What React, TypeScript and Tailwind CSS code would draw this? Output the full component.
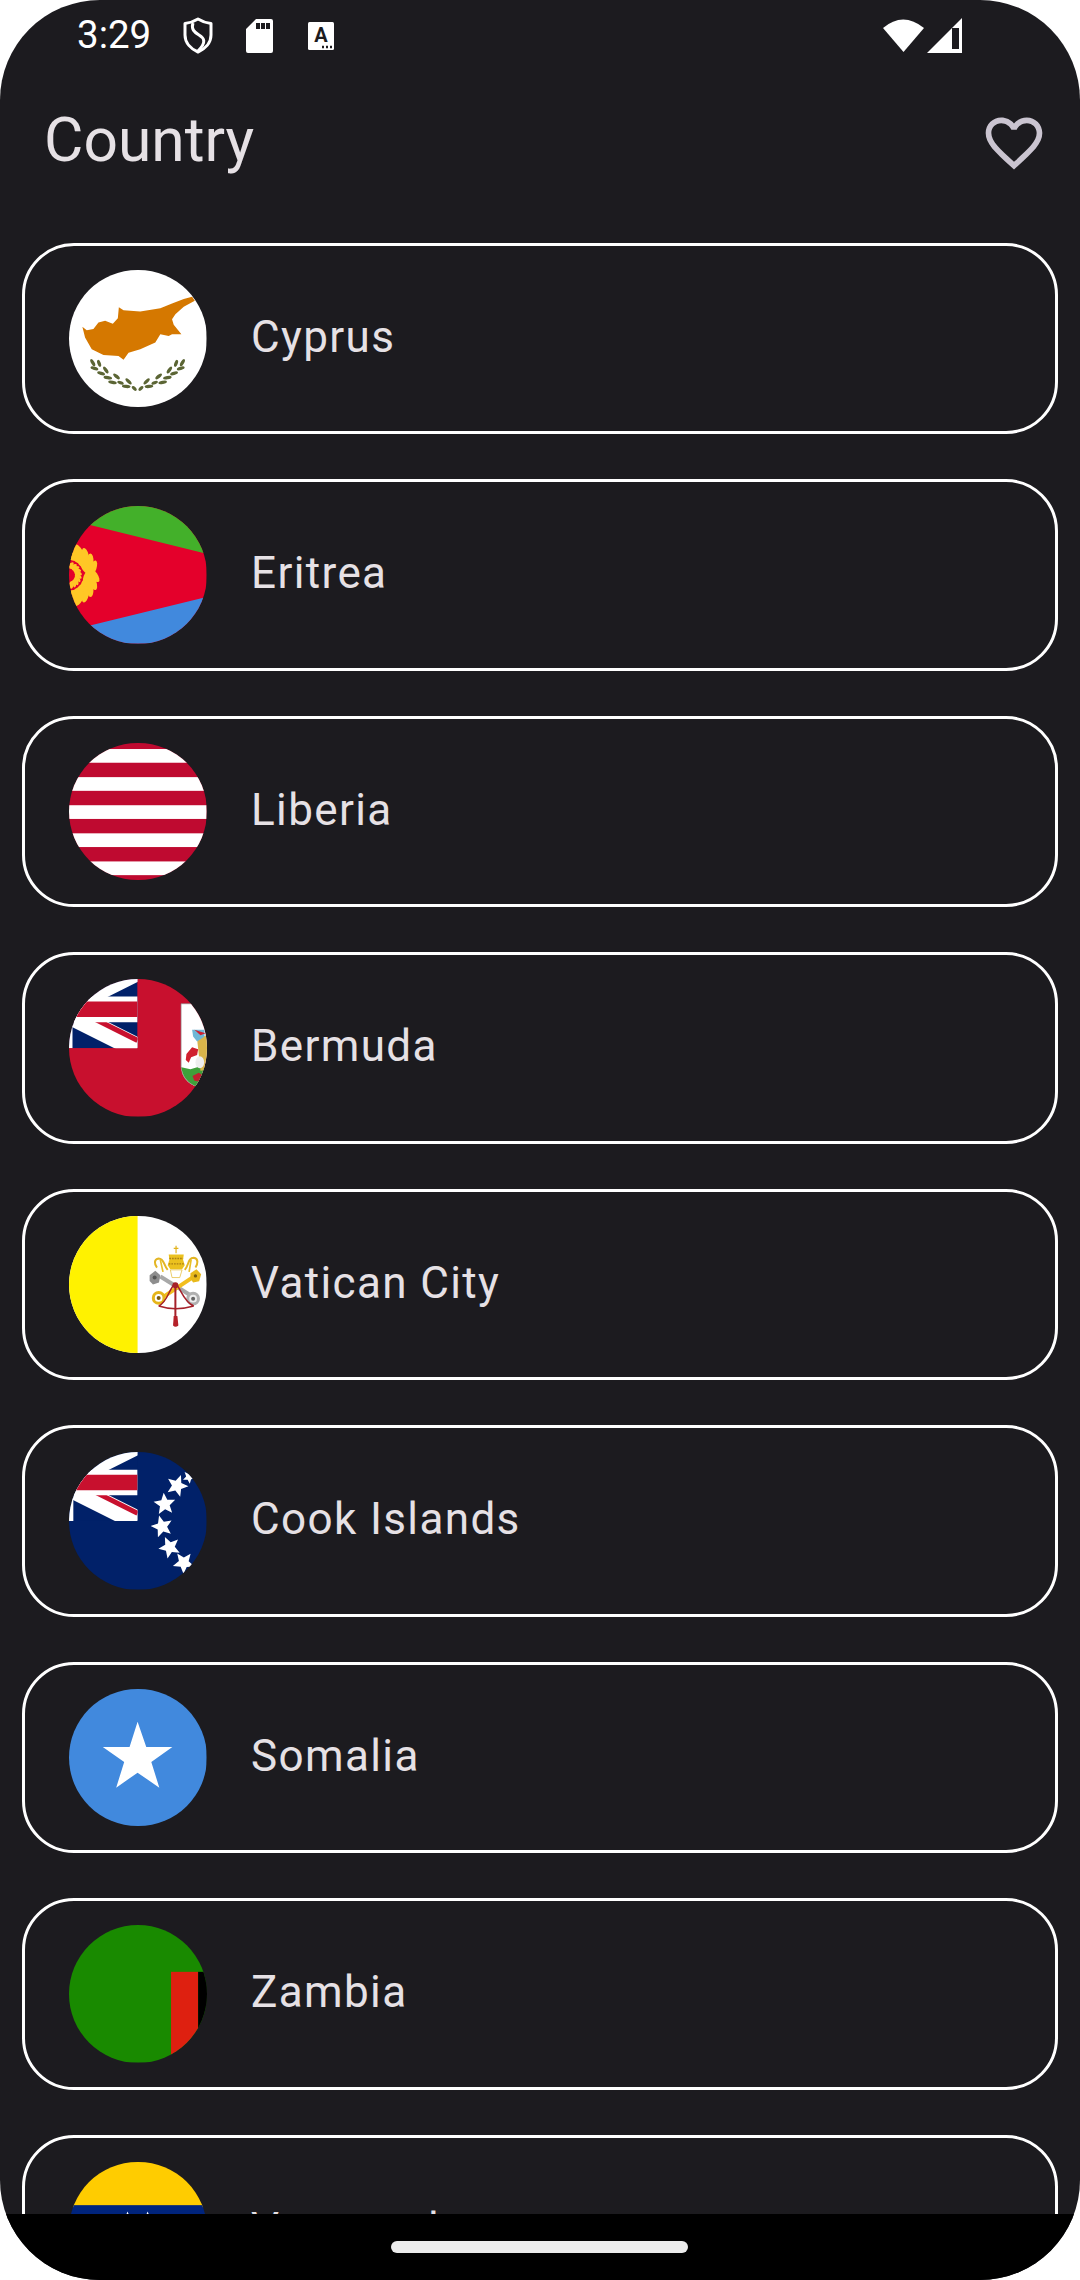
import React from "react";

const Star = ({ cx, cy, r, rot = 0, fill = "#fff" }: { cx: number; cy: number; r: number; rot?: number; fill?: string }) => {
  const pts: string[] = [];
  for (let i = 0; i < 10; i++) {
    const a = ((rot - 90 + i * 36) * Math.PI) / 180;
    const rr = i % 2 === 0 ? r : r * 0.45;
    pts.push(`${cx + rr * Math.cos(a)},${cy + rr * Math.sin(a)}`);
  }
  return <polygon points={pts.join(" ")} fill={fill} />;
};

const UnionJack = ({ x, y, w, h }: { x: number; y: number; w: number; h: number }) => (
  <svg x={x} y={y} width={w} height={h} viewBox="0 0 400 200">
    <rect width="400" height="200" fill="#012169" />
    <path d="M0 0L400 200M400 0L0 200" stroke="#fff" strokeWidth="53" />
    <path d="M200 80L400 180" stroke="#C8102E" strokeWidth="13" />
    <path d="M200 0V200M0 100H400" stroke="#fff" strokeWidth="66" />
    <path d="M200 0V200M0 100H400" stroke="#C8102E" strokeWidth="40" />
  </svg>
);

const leaves: [number, number, number, number][] = [
  [158, 335, 60, 12], [177, 337, 70, 11], [163, 352, 15, 12], [197, 357, 55, 12], [183, 367, 15, 12],
  [229, 376, 40, 12], [203, 380, 10, 13], [265, 391, 45, 12], [217, 394, 12, 13], [241, 395, 20, 10], [258, 406, 5, 13], [282, 412, 45, 9],
];

const Laurel = () => (
  <g fill="#5B6534">
    {leaves.map(([x, y, r, l], i) => (
      <React.Fragment key={i}>
        <ellipse cx={x} cy={y} rx={l} ry="5" transform={`rotate(${r} ${x} ${y})`} />
        <ellipse cx={584 - x} cy={y} rx={l} ry="5" transform={`rotate(${-r} ${584 - x} ${y})`} />
      </React.Fragment>
    ))}
  </g>
);

const Cyprus = () => (
  <svg viewBox="0 0 411 411" className="w-full h-full">
    <rect width="411" height="411" fill="#fff" />
    <g transform="translate(-87 -58)">
      <path
        d="M127 228L140 238L160 234L175 215L195 210L218 219L233 202L236 169L250 178L300 182L360 172L395 158L430 145L455 138L463 150L430 168L405 190L395 205L400 222L423 250L395 250L385 255L360 250L345 275L300 295L265 305L250 326L235 315L190 312L155 295L135 260Z"
        fill="#D57800"
      />
      <Laurel />
    </g>
  </svg>
);

const wreath = Array.from({ length: 11 }, (_, i) => -80 + i * 16);

const Leaf = ({ a, r, d, rx, ry }: { a: number; r: number; d: number; rx: number; ry: number }) => {
  const t = (a * Math.PI) / 180;
  const x = 84 + r * Math.cos(t);
  const y = 975 + r * Math.sin(t);
  return <ellipse cx={x} cy={y} rx={rx} ry={ry} fill="#FFC726" transform={`rotate(${a + d} ${x} ${y})`} />;
};

const Eritrea = () => (
  <svg viewBox="0 0 411 411" className="w-full h-full">
    <g transform="translate(-87 -768)">
      <rect x="87" y="768" width="411" height="411" fill="#E4002B" />
      <polygon points="87,768 498,768 498,911 150,825 87,810" fill="#43B02A" />
      <polygon points="87,1179 498,1179 498,1040 150,1125 87,1140" fill="#4189DD" />
      {wreath.map((a) => (
        <React.Fragment key={a}>
          <Leaf a={a} r={78} d={a < 0 ? 125 : 55} rx={24} ry={10} />
          <Leaf a={a} r={58} d={a < 0 ? 60 : 120} rx={22} ry={9} />
          <Leaf a={a} r={30} d={45} rx={14} ry={5} />
        </React.Fragment>
      ))}
    </g>
  </svg>
);

const Liberia = () => (
  <svg viewBox="0 0 411 411" className="w-full h-full">
    <rect width="411" height="411" fill="#BF0A30" />
    {[18, 102, 186, 270, 354].map((y) => (
      <rect key={y} y={y} width="411" height="41" fill="#fff" />
    ))}
  </svg>
);

const Bermuda = () => (
  <svg viewBox="0 0 411 411" className="w-full h-full">
    <g transform="translate(-87 -778)">
      <rect x="87" y="778" width="411" height="411" fill="#C8102E" />
      <UnionJack x={-174} y={752} w={466} h={233} />
      <path d="M422 852H510V1100H470Q425 1085 422 1040Z" fill="#fff" stroke="#8a8a8a" strokeWidth="2" />
      <path d="M423 1042L450 1048L475 1040L510 1044V1100H470Q428 1085 423 1042Z" fill="#3FA03A" />
      <path d="M470 958L500 945V1050L480 1052Z" fill="#D9B44A" />
      <path d="M455 930H492V950L470 965L458 950Z" fill="#6FB7D6" />
      <path d="M462 930L495 940L480 946Z" fill="#D0202E" />
      <path d="M438 1002L455 982L473 988L470 1005L452 1012L445 1028L436 1020Z" fill="#D0202E" />
      <ellipse cx="478" cy="1027" rx="13" ry="18" fill="#eee" />
      <path d="M456 1068L475 1058L490 1068L480 1085L462 1082Z" fill="#C0202E" />
    </g>
  </svg>
);

const Vatican = () => (
  <svg viewBox="0 0 411 411" className="w-full h-full">
    <rect width="411" height="411" fill="#fff" />
    <rect width="205" height="411" fill="#FFF200" />
    <g transform="translate(213 59)">
      <path d="M107 30V52M100 38H114" stroke="#E2B21C" strokeWidth="3.5" />
      <path d="M85 56H130L128 72L133 88L125 100H90L82 88L87 72Z" fill="#EBC11E" />
      <path d="M87 68H128M85 84H130" stroke="#A97F14" strokeWidth="4" strokeDasharray="5 3" />
      <path d="M82 102C70 90 72 68 55 68C40 70 42 85 50 95" stroke="#E3B625" strokeWidth="6" fill="none" />
      <path d="M133 102C145 90 142 66 160 66C175 68 172 85 165 95" stroke="#E3B625" strokeWidth="6" fill="none" />
      <path d="M60 72L68 108M152 72L146 108" stroke="#E8C02A" strokeWidth="5" />
      <path d="M90 102L125 102L118 125H95Z" fill="#fff" stroke="#E3B625" strokeWidth="2" />
      <path d="M60 122L150 178" stroke="#A8A8A8" strokeWidth="12" />
      <path d="M160 122L70 182" stroke="#F2BE1E" strokeWidth="12" />
      <polygon points="28,118 45,105 60,118 56,140 38,146 28,135" fill="#8E8E8E" />
      <circle cx="43" cy="125" r="6" fill="#555" />
      <polygon points="150,112 168,100 182,115 176,136 158,140 150,128" fill="#E8B91B" />
      <circle cx="165" cy="120" r="5" fill="#7A5C10" />
      <circle cx="55" cy="186" r="16" fill="#fff" stroke="#E6B51A" strokeWidth="9" />
      <circle cx="55" cy="186" r="6" fill="#7A5C10" />
      <circle cx="158" cy="188" r="16" fill="#eee" stroke="#B0B0B0" strokeWidth="9" />
      <circle cx="158" cy="188" r="6" fill="#666" />
      <path d="M102 146C85 160 82 198 55 210M108 146C122 160 130 198 160 210M55 210Q105 226 160 210" fill="none" stroke="#A5212A" strokeWidth="4.5" />
      <circle cx="105" cy="148" r="9" fill="#A5212A" />
      <path d="M105 150V245" stroke="#A5212A" strokeWidth="6" />
      <path d="M100 240H111L114 268Q105 276 98 268Z" fill="#B5212A" />
    </g>
  </svg>
);

const Cook = () => (
  <svg viewBox="0 0 411 411" className="w-full h-full">
    <g transform="translate(-87 -787)">
      <rect x="87" y="787" width="411" height="411" fill="#012169" />
      <UnionJack x={-168} y={763} w={460} h={230} />
      <Star cx={410} cy={888} r={34} rot={20} />
      <Star cx={373} cy={943} r={34} rot={-5} />
      <Star cx={365} cy={1010} r={34} rot={-15} />
      <Star cx={388} cy={1072} r={34} rot={-25} />
      <Star cx={430} cy={1118} r={34} rot={-35} />
      <Star cx={446} cy={862} r={20} rot={30} />
    </g>
  </svg>
);

const Somalia = () => (
  <svg viewBox="0 0 411 411" className="w-full h-full">
    <rect width="411" height="411" fill="#4189DD" />
    <g transform="translate(-87 -85)">
      <polygon
        points="292,183 318,258 396,258 333,303 357,380 292,335 228,380 252,303 188,258 268,258"
        fill="#fff"
      />
    </g>
  </svg>
);

const Zambia = () => (
  <svg viewBox="0 0 411 411" className="w-full h-full">
    <rect width="411" height="411" fill="#198A00" />
    <g transform="translate(-87 -796)">
      <rect x="392" y="936" width="81" height="280" fill="#DE2010" />
      <rect x="473" y="936" width="30" height="280" fill="#000" />
    </g>
  </svg>
);

const Venezuela = () => (
  <svg viewBox="0 0 411 411" className="w-full h-full">
    <rect width="411" height="137" fill="#FFCC00" />
    <rect y="129" width="411" height="140" fill="#00247D" />
    <rect y="269" width="411" height="142" fill="#CF142B" />
    <Star cx={175} cy={172} r={24} />
    <Star cx={235} cy={172} r={24} />
  </svg>
);

const countries: [string, React.FC][] = [
  ["Cyprus", Cyprus],
  ["Eritrea", Eritrea],
  ["Liberia", Liberia],
  ["Bermuda", Bermuda],
  ["Vatican City", Vatican],
  ["Cook Islands", Cook],
  ["Somalia", Somalia],
  ["Zambia", Zambia],
  ["Venezuela", Venezuela],
];

export default function App() {
  return (
    <div className="w-[1080px] h-[2280px] bg-white" style={{ fontFamily: "Roboto, sans-serif" }}>
      <div className="w-full h-full overflow-hidden rounded-[100px] bg-[#1C1B1F] flex flex-col">
        <div className="h-[71px] shrink-0 flex items-center pl-[77px] text-white">
          <span className="text-[38.5px] leading-none w-[106px]">3:29</span>
          <svg width="30" height="37" viewBox="0 0 30 37" className="mr-[33px]">
            <path
              d="M15 2C19 4.5 23 6 28 6.5V18C28 26 22 32 15 35C8 32 2 26 2 18V6.5C7 6 11 4.5 15 2Z"
              fill="none"
              stroke="#fff"
              strokeWidth="3"
              strokeLinejoin="round"
            />
            <path d="M10 6C8 12 11 15 16 18C21 21 24 25 15 34" fill="none" stroke="#fff" strokeWidth="3" />
          </svg>
          <svg width="27" height="34" viewBox="0 0 27 34" className="mr-[35px]">
            <path
              fillRule="evenodd"
              d="M10 0H25Q27 0 27 2V32Q27 34 25 34H2Q0 34 0 32V10ZM10 4V10H14V4ZM15 4V10H19V4ZM20 4V10H24V4Z"
              fill="#fff"
            />
          </svg>
          <svg width="26" height="28" viewBox="0 0 26 28">
            <rect width="26" height="28" rx="1.5" fill="#fff" />
            <text x="13" y="20" textAnchor="middle" fontSize="20" fontWeight="700" fill="#1C1B1F" fontFamily="Roboto, sans-serif">
              A
            </text>
            <path d="M14 25H16M18 25H20M22 25H24" stroke="#1C1B1F" strokeWidth="2.5" />
          </svg>
          <svg width="79" height="35" viewBox="0 0 79 35" className="ml-[549px]">
            <path d="M0 10Q20 -7 41 10L20.5 34Z" fill="#fff" />
            <path fillRule="evenodd" d="M79 0V35H44ZM69 10L76 10V31H69Z" fill="#fff" />
          </svg>
        </div>
        <div className="h-[140px] shrink-0 flex items-center justify-between pl-[44px] pr-[32px]">
          <h1 className="text-[60.5px] leading-none font-normal text-[#E6E1E5]">Country</h1>
          <svg width="68" height="68" viewBox="0 0 24 24" fill="#CAC4D0" className="mt-[3px]">
            <path d="M16.5 3c-1.74 0-3.41.81-4.5 2.09C10.91 3.81 9.24 3 7.5 3 4.42 3 2 5.42 2 8.5c0 3.78 3.4 6.86 8.55 11.54L12 21.35l1.45-1.32C18.6 15.36 22 12.28 22 8.5 22 5.42 19.58 3 16.5 3zm-4.4 15.55l-.1.1-.1-.1C7.14 14.24 4 11.39 4 8.5 4 6.5 5.5 5 7.5 5c1.54 0 3.04.99 3.57 2.36h1.87C13.46 5.99 14.96 5 16.5 5c2 0 3.5 1.5 3.5 3.5 0 2.89-3.14 5.74-7.9 10.05z" />
          </svg>
        </div>
        <div className="flex-1 min-h-0 overflow-hidden flex flex-col gap-[45px] px-[22px] pt-[31.5px]">
          {countries.map(([name, Flag]) => (
            <div
              key={name}
              className="h-[191.5px] shrink-0 rounded-[52px] border-[3px] border-white flex items-center pl-[44px] gap-[44.5px]"
            >
              <div className="w-[137.5px] h-[137.5px] shrink-0 rounded-full overflow-hidden">
                <Flag />
              </div>
              <span className="text-[44px] leading-none tracking-[1.375px] text-[#E6E1E5] mb-[3px]">{name}</span>
            </div>
          ))}
        </div>
        <div className="h-[66px] shrink-0 bg-black flex items-center justify-center">
          <div className="w-[297px] h-[12px] rounded-full bg-[#ECECEC] mr-[1px]" />
        </div>
      </div>
    </div>
  );
}
